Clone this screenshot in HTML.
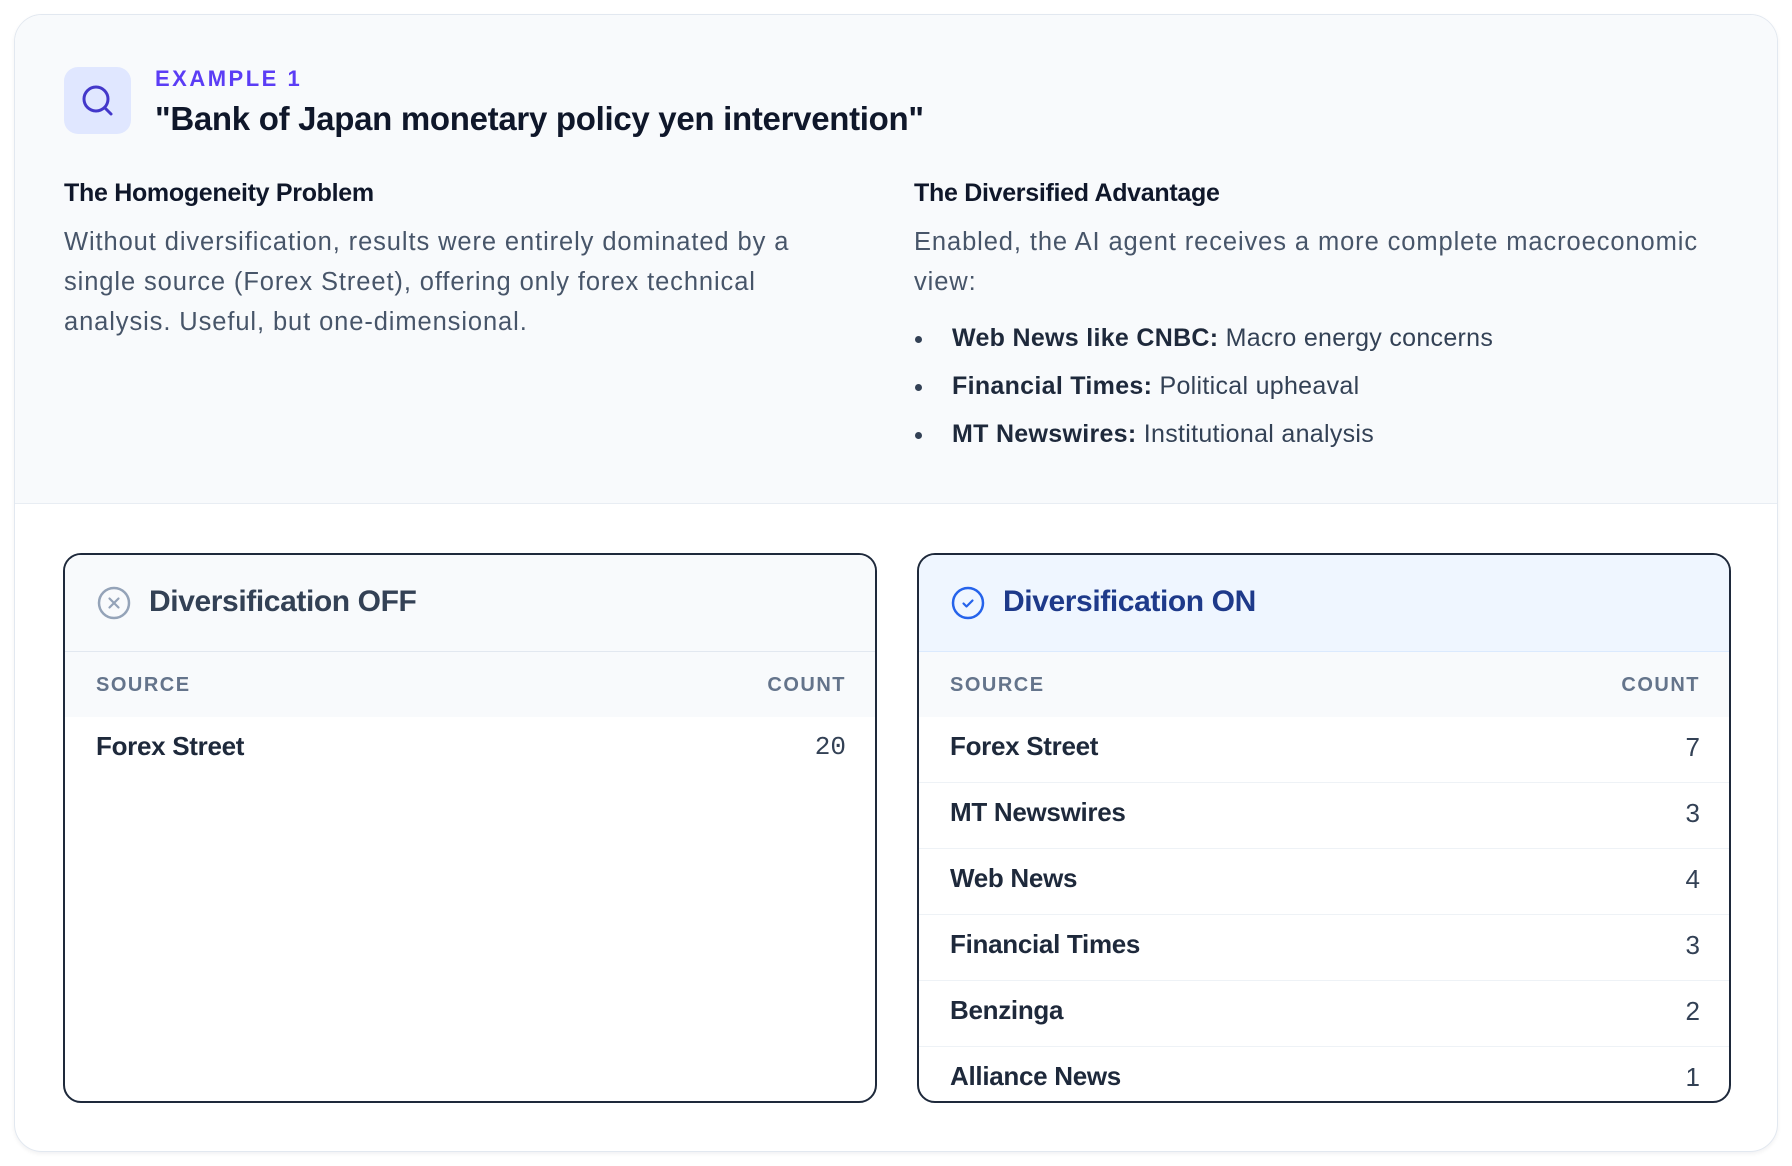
<!DOCTYPE html>
<html><head><meta charset="utf-8"><style>
*{box-sizing:border-box;margin:0;padding:0}
body{width:1792px;height:1166px;background:#fff;font-family:"Liberation Sans",sans-serif;position:relative;overflow:hidden}
.card{position:absolute;left:14px;top:14px;width:1764px;height:1138px;border:1.5px solid #e2e8f0;border-radius:28px;background:#fff;overflow:hidden;box-shadow:0 2px 4px rgba(15,23,42,.06)}
.top{position:absolute;left:0;top:0;width:100%;height:489px;background:#f8fafc;border-bottom:1.5px solid #e8edf3}
.abs{position:absolute;white-space:nowrap}
.icon{left:49px;top:52px;width:67px;height:67px;border-radius:14px;background:#e0e7ff}
.ex{left:140px;top:51px;font-size:22px;font-weight:bold;letter-spacing:2.5px;color:#5b3df5}
.title{left:140px;top:85px;font-size:33px;font-weight:bold;color:#0f172a;letter-spacing:-0.3px}
.h{font-size:25px;font-weight:bold;color:#0f172a;letter-spacing:-0.3px;top:164px}
.p{font-size:25.5px;color:#475569;line-height:40px;top:207px;letter-spacing:0.9px}
.li{font-size:25px;color:#334155;letter-spacing:0.3px}
.li b{color:#1e293b}
.dot{width:7px;height:7px;border-radius:50%;background:#334155}
.tbl{position:absolute;top:553px;width:814px;height:550px;border:2px solid #1e293b;border-radius:18px;overflow:hidden;background:#fff}
.hd{height:97px;border-bottom:1.5px solid #e2e8f0;position:relative;background:#f8fafc}
.hd span{position:absolute;left:84px;top:30px;font-size:30px;font-weight:bold;letter-spacing:-0.4px}
.hd svg{position:absolute;left:32px;top:31px}
.ch{height:65px;background:#f8fafc;position:relative;font-size:20px;letter-spacing:1.5px;color:#64748b;font-weight:bold}
.ch .l{position:absolute;left:31px;top:22px}
.ch .r{position:absolute;right:29px;top:22px}
.row{height:66px;position:relative;border-bottom:1.5px solid #eef2f6;font-size:26px;color:#1e293b;font-weight:bold}
.row .l{position:absolute;left:31px;top:14px;letter-spacing:-0.3px}
.row .r{position:absolute;right:29px;top:15px;font-weight:normal;color:#334155}
</style></head><body>
<div class="card">
<div class="top"></div>
<div class="abs icon"><svg width="67" height="67" viewBox="0 0 67 67"><circle cx="32" cy="32" r="12" fill="none" stroke="#4338ca" stroke-width="3"/><line x1="41" y1="41" x2="47" y2="47" stroke="#4338ca" stroke-width="3" stroke-linecap="round"/></svg></div>
<div class="abs ex">EXAMPLE 1</div>
<div class="abs title">"Bank of Japan monetary policy yen intervention"</div>
<div class="abs h" style="left:49px">The Homogeneity Problem</div>
<div class="abs p" style="left:49px">Without diversification, results were entirely dominated by a<br>single source (Forex Street), offering only forex technical<br>analysis. Useful, but one-dimensional.</div>
<div class="abs h" style="left:899px">The Diversified Advantage</div>
<div class="abs p" style="left:899px">Enabled, the AI agent receives a more complete macroeconomic<br>view:</div>
<div class="abs dot" style="left:900px;top:321px"></div>
<div class="abs li" style="left:937px;top:309px"><b>Web News like CNBC:</b> Macro energy concerns</div>
<div class="abs dot" style="left:900px;top:369px"></div>
<div class="abs li" style="left:937px;top:357px"><b>Financial Times:</b> Political upheaval</div>
<div class="abs dot" style="left:900px;top:417px"></div>
<div class="abs li" style="left:937px;top:405px"><b>MT Newswires:</b> Institutional analysis</div>
</div>

<div class="tbl" style="left:63px">
<div class="hd"><svg width="34" height="34" viewBox="0 0 34 34"><circle cx="17" cy="17" r="15" fill="none" stroke="#94a3b8" stroke-width="2.5"/><path d="M12.5 12.5l9 9M21.5 12.5l-9 9" stroke="#94a3b8" stroke-width="2.2" stroke-linecap="round"/></svg><span style="color:#334155">Diversification OFF</span></div>
<div class="ch"><span class="l">SOURCE</span><span class="r">COUNT</span></div>
<div class="row" style="border:none"><span class="l">Forex Street</span><span class="r" style="font-family:'Liberation Mono',monospace">20</span></div>
</div>

<div class="tbl" style="left:917px">
<div class="hd" style="background:#eff6ff;border-bottom-color:#dbeafe"><svg width="34" height="34" viewBox="0 0 34 34"><circle cx="17" cy="17" r="15" fill="none" stroke="#2563eb" stroke-width="2.5"/><path d="M12.5 17.5l3 3 6-6" fill="none" stroke="#2563eb" stroke-width="2.2" stroke-linecap="round" stroke-linejoin="round"/></svg><span style="color:#1e3a8a">Diversification ON</span></div>
<div class="ch"><span class="l">SOURCE</span><span class="r">COUNT</span></div>
<div class="row"><span class="l">Forex Street</span><span class="r">7</span></div>
<div class="row"><span class="l">MT Newswires</span><span class="r">3</span></div>
<div class="row"><span class="l">Web News</span><span class="r">4</span></div>
<div class="row"><span class="l">Financial Times</span><span class="r">3</span></div>
<div class="row"><span class="l">Benzinga</span><span class="r">2</span></div>
<div class="row" style="border:none"><span class="l">Alliance News</span><span class="r">1</span></div>
</div>
</body></html>
